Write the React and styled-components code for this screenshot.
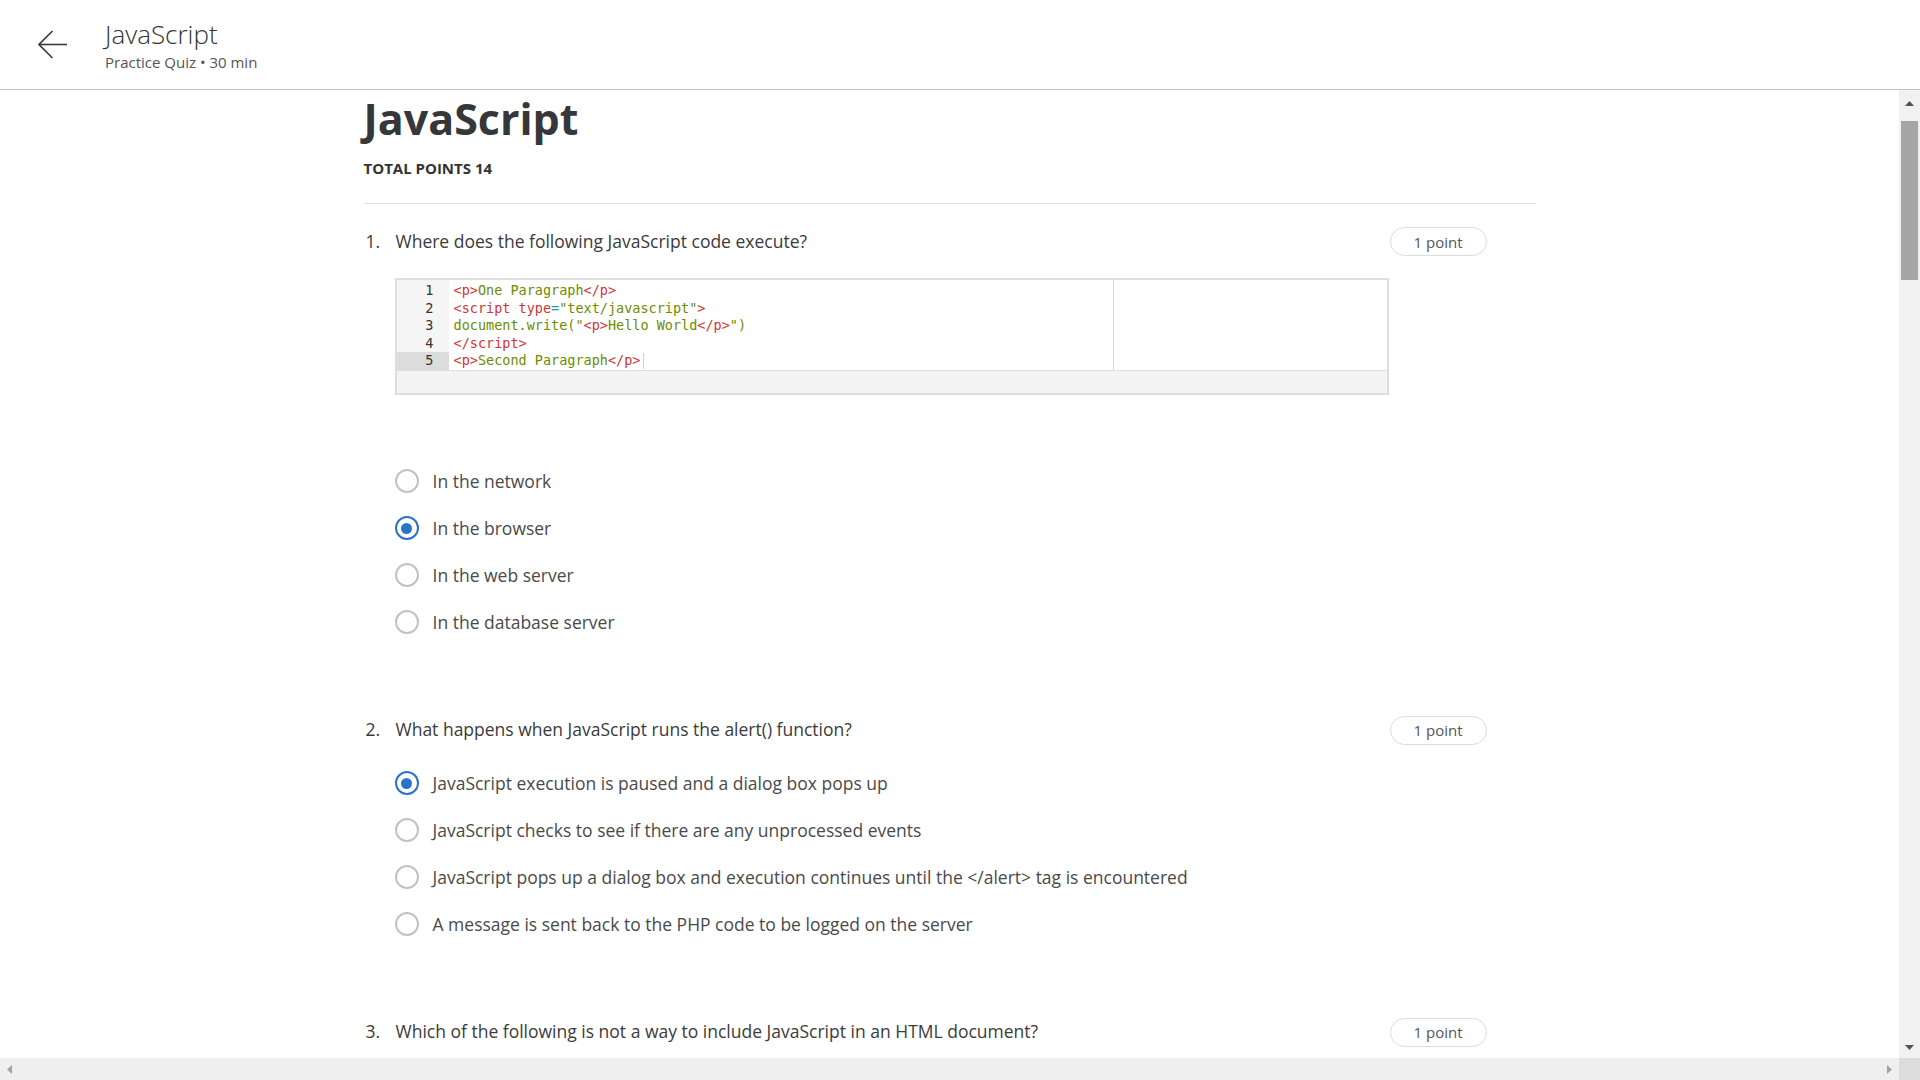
import React from "react";
import styled, { createGlobalStyle } from "styled-components";

const GlobalStyle = createGlobalStyle`
  html, body {
    margin: 0;
    padding: 0;
    background: #fff;
    font-family: "Open Sans", "Liberation Sans", sans-serif;
    color: #333;
  }
  * { box-sizing: border-box; }
`;

const Shell = styled.div`
  height: 100vh;
  display: flex;
  flex-direction: column;
  overflow: hidden;
`;

const Header = styled.header`
  height: 90px;
  flex-shrink: 0;
  display: flex;
  align-items: center;
  gap: 37px;
  padding-left: 38px;
  border-bottom: 1px solid #c4c4c4;
`;

const BackButton = styled.button`
  width: 30px;
  height: 30px;
  padding: 0;
  border: 0;
  background: none;
  display: flex;
  cursor: pointer;
`;

const HeaderText = styled.div`
  display: flex;
  flex-direction: column;
  gap: 2px;
`;

const HeaderTitle = styled.div`
  font-size: 26px;
  line-height: 32px;
  font-weight: 300;
  color: #333;
`;

const HeaderSub = styled.div`
  font-size: 15px;
  line-height: 20px;
  color: #555;
`;

const Viewport = styled.div`
  flex: 1;
  min-height: 0;
  display: flex;
`;

const Scroller = styled.main`
  flex: 1;
  overflow: hidden;
`;

const Page = styled.div`
  width: 1172px;
  margin: 0 auto;
`;

const Title = styled.h1`
  margin: 0;
  font-size: 43px;
  line-height: 57px;
  font-weight: 700;
  color: #363739;
`;

const TotalPoints = styled.div`
  margin-top: 11px;
  font-size: 15px;
  line-height: 20px;
  font-weight: 700;
  color: #333;
`;

const Divider = styled.hr`
  margin: 25px 0 0;
  border: 0;
  border-top: 1px solid #e2e2e2;
`;

const QuestionList = styled.div`
  display: flex;
  flex-direction: column;
  gap: 70px;
  padding-top: 23px;
`;

const Question = styled.section`
  padding-right: 49px;
`;

const QuestionHead = styled.div`
  display: flex;
  align-items: center;
  height: 29px;
`;

const QNum = styled.span`
  width: 32px;
  padding-left: 2px;
  margin-top: -2px;
  font-size: 17.5px;
  color: #3b3b3b;
`;

const QText = styled.span`
  flex: 1;
  margin-top: -2px;
  font-size: 17.5px;
  line-height: 24px;
  color: #3b3b3b;
`;

const Pill = styled.span`
  width: 97px;
  height: 29px;
  border: 1px solid #dcdcdc;
  border-radius: 15px;
  display: flex;
  align-items: center;
  justify-content: center;
  font-size: 15px;
  color: #555;
`;

const Body = styled.div`
  margin-left: 31px;
  margin-right: 98px;
`;

const CodeBox = styled.div`
  margin-top: 22px;
  margin-bottom: 63px;
  border: 2px solid #dedede;
  display: flex;
  flex-direction: column;
`;

const Editor = styled.div`
  display: flex;
`;

const LeftPane = styled.div`
  width: 717px;
  display: flex;
  border-right: 1px solid #cdd6df;
`;

const RightPane = styled.div`
  flex: 1;
`;

const Gutter = styled.div`
  width: 52px;
  background: #f5f5f5;
  padding-top: 2px;
`;

const LineNo = styled.div`
  height: 17.5px;
  line-height: 17.5px;
  padding-right: 15px;
  text-align: right;
  font-family: "DejaVu Sans Mono", "Liberation Mono", monospace;
  font-size: 13.5px;
  color: #333;
  background: ${(p) => (p.$active ? "#dcdcdc" : "transparent")};
`;

const Lines = styled.div`
  flex: 1;
  padding: 2px 0 0 5px;
`;

const CodeLine = styled.div`
  height: 17.5px;
  line-height: 17.5px;
  white-space: pre;
  font-family: "DejaVu Sans Mono", "Liberation Mono", monospace;
  font-size: 13.5px;
  display: flex;
  align-items: center;
`;

const Tok = styled.span`
  color: ${(p) =>
    p.$kind === "tag" ? "#d03535" : p.$kind === "op" ? "#1b9c9c" : "#6c8c00"};
`;

const Cursor = styled.span`
  display: inline-block;
  width: 1px;
  height: 16px;
  margin-left: 3px;
  background: #cfcfcf;
`;

const EditorFooter = styled.div`
  height: 23px;
  border-top: 1px solid #dedede;
  background: #f4f4f4;
`;

const Options = styled.div`
  margin-top: 15px;
  display: flex;
  flex-direction: column;
`;

const Option = styled.label`
  height: 47px;
  display: flex;
  align-items: center;
  gap: 14px;
  font-size: 17.5px;
  color: #4a4a4a;
  cursor: pointer;
`;

const Radio = styled.span`
  width: 24px;
  height: 24px;
  border-radius: 50%;
  flex-shrink: 0;
  border: ${(p) => (p.$checked ? "2.5px solid #2b72cb" : "2px solid #c2c2c2")};
  display: flex;
  align-items: center;
  justify-content: center;
  &::after {
    content: "";
    width: 11px;
    height: 11px;
    border-radius: 50%;
    background: ${(p) => (p.$checked ? "#2b72cb" : "transparent")};
  }
`;

const VBar = styled.div`
  width: 21px;
  background: #f1f1f1;
  display: flex;
  flex-direction: column;
  align-items: center;
`;

const ArrowBtn = styled.div`
  height: ${(p) => p.$h}px;
  width: 100%;
  display: flex;
  align-items: center;
  justify-content: center;
  flex-shrink: 0;
`;

const VTrack = styled.div`
  flex: 1;
  width: 100%;
  padding: 0 2px;
`;

const VThumb = styled.div`
  height: 159px;
  margin-top: 5px;
  background: #a6a6a6;
`;

const HBar = styled.div`
  height: 22px;
  flex-shrink: 0;
  display: flex;
`;

const HTrack = styled.div`
  flex: 1;
  background: #efefef;
  display: flex;
  align-items: center;
  justify-content: space-between;
  padding: 0 7px;
`;

const Corner = styled.div`
  width: 21px;
  background: #dcdcdc;
`;

function Tri({ dir, color }) {
  const pts = {
    up: "0,5 4.5,0 9,5",
    down: "0,0 4.5,5 9,0",
    left: "5,0 0,4.5 5,9",
    right: "0,0 5,4.5 0,9",
  }[dir];
  const vertical = dir === "up" || dir === "down";
  return (
    <svg width={vertical ? 9 : 5} height={vertical ? 5 : 9} viewBox={vertical ? "0 0 9 5" : "0 0 5 9"}>
      <polygon points={pts} fill={color} />
    </svg>
  );
}

const code = [
  [["tag", "<p>"], ["txt", "One Paragraph"], ["tag", "</p>"]],
  [["tag", "<script type"], ["op", "="], ["txt", '"text/javascript"'], ["tag", ">"]],
  [["txt", 'document.write("'], ["tag", "<p>"], ["txt", "Hello World"], ["tag", "</p>"], ["txt", '")']],
  [["tag", "</script>"]],
  [["tag", "<p>"], ["txt", "Second Paragraph"], ["tag", "</p>"]],
];

const questions = [
  {
    text: "Where does the following JavaScript code execute?",
    code: true,
    options: ["In the network", "In the browser", "In the web server", "In the database server"],
    checked: 1,
  },
  {
    text: "What happens when JavaScript runs the alert() function?",
    options: [
      "JavaScript execution is paused and a dialog box pops up",
      "JavaScript checks to see if there are any unprocessed events",
      "JavaScript pops up a dialog box and execution continues until the </alert> tag is encountered",
      "A message is sent back to the PHP code to be logged on the server",
    ],
    checked: 0,
  },
  {
    text: "Which of the following is not a way to include JavaScript in an HTML document?",
    options: [],
    checked: -1,
  },
];

function CodeBlock() {
  return (
    <CodeBox>
      <Editor>
        <LeftPane>
          <Gutter>
            {code.map((_, i) => (
              <LineNo key={i} $active={i === code.length - 1}>{i + 1}</LineNo>
            ))}
          </Gutter>
          <Lines>
            {code.map((line, i) => (
              <CodeLine key={i}>
                {line.map(([kind, t], j) => (
                  <Tok key={j} $kind={kind}>{t}</Tok>
                ))}
                {i === code.length - 1 && <Cursor />}
              </CodeLine>
            ))}
          </Lines>
        </LeftPane>
        <RightPane />
      </Editor>
      <EditorFooter />
    </CodeBox>
  );
}

export default function App() {
  return (
    <Shell>
      <GlobalStyle />
      <Header>
        <BackButton aria-label="Back">
          <svg width="30" height="30" viewBox="0 0 30 30" fill="none" stroke="#3a3a3a" strokeWidth="1.6">
            <path d="M29 14.5H1" />
            <path d="M14.5 1L1 14.5L14.5 28" />
          </svg>
        </BackButton>
        <HeaderText>
          <HeaderTitle>JavaScript</HeaderTitle>
          <HeaderSub>Practice Quiz • 30 min</HeaderSub>
        </HeaderText>
      </Header>
      <Viewport>
        <Scroller>
          <Page>
            <Title>JavaScript</Title>
            <TotalPoints>TOTAL POINTS 14</TotalPoints>
            <Divider />
            <QuestionList>
              {questions.map((q, qi) => (
                <Question key={qi}>
                  <QuestionHead>
                    <QNum>{qi + 1}.</QNum>
                    <QText>{q.text}</QText>
                    <Pill>1 point</Pill>
                  </QuestionHead>
                  <Body>
                    {q.code && <CodeBlock />}
                    {q.options.length > 0 && (
                      <Options>
                        {q.options.map((o, oi) => (
                          <Option key={oi}>
                            <Radio $checked={oi === q.checked} />
                            {o}
                          </Option>
                        ))}
                      </Options>
                    )}
                  </Body>
                </Question>
              ))}
            </QuestionList>
          </Page>
        </Scroller>
        <VBar>
          <ArrowBtn $h={26}>
            <Tri dir="up" color="#505050" />
          </ArrowBtn>
          <VTrack>
            <VThumb />
          </VTrack>
          <ArrowBtn $h={22}>
            <Tri dir="down" color="#505050" />
          </ArrowBtn>
        </VBar>
      </Viewport>
      <HBar>
        <HTrack>
          <Tri dir="left" color="#a3a3a3" />
          <Tri dir="right" color="#a3a3a3" />
        </HTrack>
        <Corner />
      </HBar>
    </Shell>
  );
}
